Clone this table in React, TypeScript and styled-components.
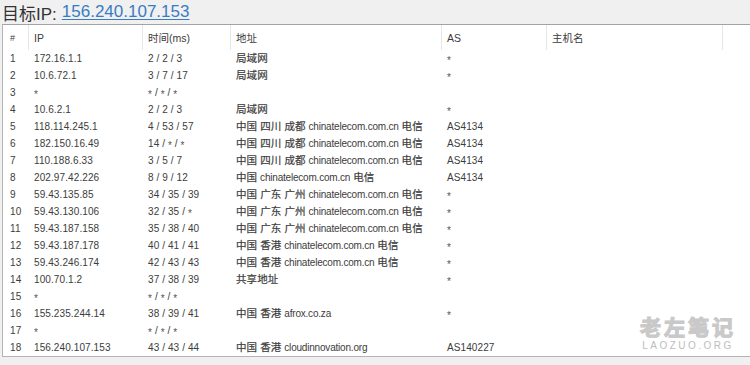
import React from 'react';
import styled, { createGlobalStyle } from 'styled-components';

const GlobalStyle = createGlobalStyle`
body {
  margin: 0;
  background: #f0f0f0;
  font-family: "Liberation Sans", "Noto Sans CJK SC", sans-serif;
  color: #333;
}
`;

const Page = styled.div`
position: relative;
width: 750px;
height: 365px;
overflow: hidden;
background: #f0f0f0;
`;

const TitleBar = styled.div`
height: 24px;
padding-left: 2px;
display: flex;
align-items: center;
gap: 5px;
font-size: 17px;
color: #333;
white-space: nowrap;
`;

const TargetLink = styled.a`
color: #3a7cc4;
text-decoration: underline;
text-underline-offset: 2px;
`;

const Frame = styled.div`
margin-left: 2px;
height: 331px;
background: #fff;
border-top: 1px solid #a3a3a3;
border-left: 1px solid #b4b4b4;
border-bottom: 1px solid #b4b4b4;
`;

const Row = styled.div<{ header?: boolean }>`
display: grid;
grid-template-columns: 26px 114px 88px 211px 105px 176px 1fr;
height: ${p => (p.header ? '25px' : '17px')};
align-items: center;
font-size: 10px;
color: #3c3c3c;
white-space: nowrap;
`;

const HeadCell = styled.div<{ first?: boolean; last?: boolean }>`
height: 100%;
display: flex;
align-items: center;
padding-left: ${p => (p.first ? '7px' : '5px')};
border-right: ${p => (p.last ? 'none' : '1px solid #e6e6e6')};
font-size: ${p => (p.first ? '9px' : '10.5px')};
`;

const Cell = styled.div<{ first?: boolean }>`
padding-left: ${p => (p.first ? '7px' : '5px')};
line-height: 17px;
letter-spacing: 0.1px;
`;

const Cjk = styled.span`
font-size: 10.5px;
-webkit-text-stroke: 0.2px #3c3c3c;
`;

const Latin = styled.span`
letter-spacing: -0.2px;
`;

const Star = styled.span`
display: inline-block;
font-size: 10px;
line-height: 10px;
transform: translateY(2px);
color: #555;
`;

const Watermark = styled.div`
position: absolute;
right: 14px;
bottom: 13px;
display: flex;
flex-direction: column;
align-items: center;
color: #c9c9c9;
pointer-events: none;
`;

const MarkTitle = styled.div`
font-size: 21px;
font-weight: 700;
letter-spacing: 3px;
line-height: 24px;
-webkit-text-stroke: 1.2px #c9c9c9;
`;

const MarkSub = styled.div`
font-size: 10px;
letter-spacing: 2.5px;
line-height: 12px;
color: #bdbdbd;
`;

// small centered asterisks like the original tool draws them
const stars = (text: string) =>
    text.split('*').map((part, i) => (
        <React.Fragment key={i}>
            {i > 0 && <Star>*</Star>}
            {part}
        </React.Fragment>
    ));

type Hop = [string, string, string, React.ReactNode, string];

const telecom = (loc: string) => (
    <>
        <Cjk>{loc}</Cjk> <Latin>chinatelecom.com.cn</Latin> <Cjk>电信</Cjk>
    </>
);

const hops: Hop[] = [
    ['1', '172.16.1.1', '2 / 2 / 3', <Cjk>局域网</Cjk>, '*'],
    ['2', '10.6.72.1', '3 / 7 / 17', <Cjk>局域网</Cjk>, '*'],
    ['3', '*', '* / * / *', '', ''],
    ['4', '10.6.2.1', '2 / 2 / 3', <Cjk>局域网</Cjk>, '*'],
    ['5', '118.114.245.1', '4 / 53 / 57', telecom('中国 四川 成都'), 'AS4134'],
    ['6', '182.150.16.49', '14 / * / *', telecom('中国 四川 成都'), 'AS4134'],
    ['7', '110.188.6.33', '3 / 5 / 7', telecom('中国 四川 成都'), 'AS4134'],
    ['8', '202.97.42.226', '8 / 9 / 12', telecom('中国'), 'AS4134'],
    ['9', '59.43.135.85', '34 / 35 / 39', telecom('中国 广东 广州'), '*'],
    ['10', '59.43.130.106', '32 / 35 / *', telecom('中国 广东 广州'), '*'],
    ['11', '59.43.187.158', '35 / 38 / 40', telecom('中国 广东 广州'), '*'],
    ['12', '59.43.187.178', '40 / 41 / 41', telecom('中国 香港'), '*'],
    ['13', '59.43.246.174', '42 / 43 / 43', telecom('中国 香港'), '*'],
    ['14', '100.70.1.2', '37 / 38 / 39', <Cjk>共享地址</Cjk>, '*'],
    ['15', '*', '* / * / *', '', ''],
    ['16', '155.235.244.14', '38 / 39 / 41', <><Cjk>中国 香港</Cjk> <Latin>afrox.co.za</Latin></>, '*'],
    ['17', '*', '* / * / *', '', ''],
    ['18', '156.240.107.153', '43 / 43 / 44', <><Cjk>中国 香港</Cjk> <Latin>cloudinnovation.org</Latin></>, 'AS140227'],
];

const headers = ['#', 'IP', '时间(ms)', '地址', 'AS', '主机名'];

const App: React.FC = () => (
    <>
        <GlobalStyle />
        <Page>
            <TitleBar>
                <span>目标IP:</span>
                <TargetLink>156.240.107.153</TargetLink>
            </TitleBar>
            <Frame>
                <Row header>
                    {headers.map((h, i) => (
                        <HeadCell key={h} first={i === 0}>{h}</HeadCell>
                    ))}
                    <HeadCell last />
                </Row>
                {hops.map(([n, ip, time, addr, as]) => (
                    <Row key={n}>
                        <Cell first>{n}</Cell>
                        <Cell>{stars(ip)}</Cell>
                        <Cell>{stars(time)}</Cell>
                        <Cell>{addr}</Cell>
                        <Cell>{stars(as)}</Cell>
                        <Cell />
                        <Cell />
                    </Row>
                ))}
            </Frame>
            <Watermark>
                <MarkTitle>老左笔记</MarkTitle>
                <MarkSub>LAOZUO.ORG</MarkSub>
            </Watermark>
        </Page>
    </>
);

export default App;
